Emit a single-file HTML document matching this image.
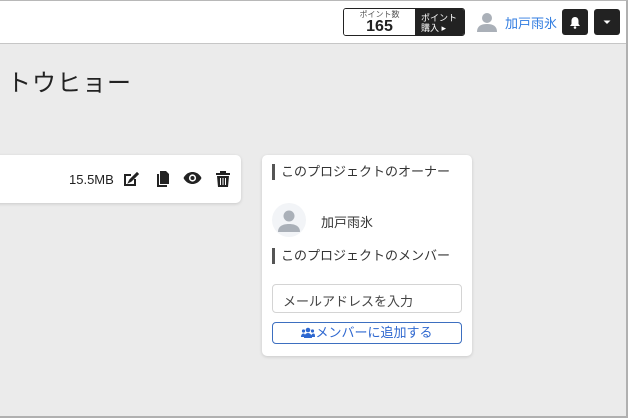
<!DOCTYPE html>
<html><head><meta charset="utf-8"><style>
*{margin:0;padding:0;box-sizing:border-box}
body{width:628px;height:418px;overflow:hidden;background:#ebebeb;font-family:"Liberation Sans","Noto Sans CJK JP",sans-serif;position:relative;color:#222}
.frame{position:absolute;left:0;top:0;width:628px;height:418px;border-top:1px solid #b8b8b8;border-right:2px solid #b0b0b0;border-bottom:2px solid #b0b0b0;z-index:10;pointer-events:none}
.hdr{position:absolute;left:0;top:0;width:628px;height:44px;background:#fff;border-bottom:1px solid #c6c6c6}
.abs{position:absolute}
.pts{left:343px;top:8px;width:122px;height:28px;border:1px solid #222;border-radius:3px;overflow:hidden;display:flex}
.pts .a{width:71px;background:#fff;text-align:center}
.pts .b{flex:1;background:#222;color:#fff;font-size:9px;line-height:10px;padding:4px 0 0 6px}
.btn{background:#222;border-radius:3px;width:26px;height:26px;top:9px}
.card{background:#fff;border-radius:5px;box-shadow:0 1px 3px rgba(0,0,0,.15)}
.h{font-size:13px;color:#333;border-left:3px solid #555;padding-left:6px;line-height:16px;height:16px}
</style></head><body>
<div class="hdr"></div>
<div class="abs pts"><div class="a"><div style="font-size:8px;color:#555;line-height:9px;margin-top:1px">ポイント数</div><div style="font-size:16px;font-weight:bold;line-height:16px">165</div></div><div class="b">ポイント<br>購入 ▸</div></div>
<svg class="abs" style="left:476px;top:11px" width="22" height="22" viewBox="0 0 22 22"><circle cx="11" cy="7" r="5" fill="#aab0b8"/><path d="M1 21c0-6 4-8 10-8s10 2 10 8z" fill="#aab0b8"/></svg>
<div class="abs" style="left:505px;top:13px;font-size:13px;color:#2f7be0">加戸雨氷</div>
<div class="abs btn" style="left:562px"><svg width="26" height="26" viewBox="0 0 26 26"><path d="M13 8c-2.5 0-3.5 2-3.5 4v3l-1.5 2h10l-1.5-2v-3c0-2-1-4-3.5-4z" fill="#fff"/><circle cx="13" cy="18.5" r="1.3" fill="#fff"/></svg></div>
<div class="abs btn" style="left:594px"><svg width="26" height="26" viewBox="0 0 26 26"><path d="M9.5 11.5h7l-3.5 3.5z" fill="#fff"/></svg></div>
<div class="abs" style="left:7px;top:63px;font-size:24px;color:#222;letter-spacing:1px">トウヒョー</div>
<div class="abs card" style="left:-6px;top:155px;width:247px;height:48px">
<div class="abs" style="left:75px;top:17px;font-size:13px;color:#222">15.5MB</div>
<svg class="abs" style="left:128px;top:15px" width="18" height="18" viewBox="0 0 18 18"><path d="M2 4h7v2H4v8h8V9h2v7H2z" fill="#222"/><path d="M9 11l-2 1 1-2 7-7 1 1z" fill="#222" stroke="#222" stroke-width="1.6"/></svg>
<svg class="abs" style="left:161px;top:15px" width="16" height="18" viewBox="0 0 16 18"><path d="M2 4h2v11h8v2H2z" fill="#222"/><path d="M5 1h6l3 3v10H5z" fill="#222"/></svg>
<svg class="abs" style="left:189px;top:16px" width="19" height="14" viewBox="0 0 19 14"><path d="M0.5 7C3 2 7 1 9.5 1S16 2 18.5 7C16 12 12 13 9.5 13S3 12 0.5 7z" fill="#222"/><circle cx="9.5" cy="7" r="3.6" fill="#fff"/><circle cx="9.5" cy="7" r="2" fill="#222"/></svg>
<svg class="abs" style="left:221px;top:15px" width="16" height="18" viewBox="0 0 16 18"><path d="M1 3h14v2H1zM5 1h6v2H5zM2 6h12l-1 11H3z" fill="#222"/><path d="M5.5 8v7M8 8v7M10.5 8v7" stroke="#fff" stroke-width="1"/></svg>
</div>
<div class="abs card" style="left:262px;top:155px;width:210px;height:201px">
<div class="abs h" style="left:10px;top:9px">このプロジェクトのオーナー</div>
<div class="abs" style="left:10px;top:48px;width:34px;height:34px;border-radius:50%;background:#f2f4f7"><svg width="34" height="34" viewBox="0 0 34 34"><circle cx="17" cy="13" r="5.5" fill="#aab0b8"/><path d="M6 29c0-6 5-8 11-8s11 2 11 8z" fill="#aab0b8"/></svg></div>
<div class="abs" style="left:59px;top:57px;font-size:13px;color:#333">加戸雨氷</div>
<div class="abs h" style="left:10px;top:93px">このプロジェクトのメンバー</div>
<div class="abs" style="left:10px;top:129px;width:190px;height:29px;border:1px solid #d4d4d4;border-radius:4px;font-size:13px;color:#444;padding:6px 0 0 10px">メールアドレスを入力</div>
<div class="abs" style="left:10px;top:167px;width:190px;height:22px;border:1px solid #3d6fc0;border-radius:4px;font-size:13px;color:#2f68d0;text-align:center;line-height:19px"><svg width="14" height="11" viewBox="0 0 14 11" style="vertical-align:-1px"><circle cx="7" cy="3" r="2.3" fill="#2f68d0"/><circle cx="2.5" cy="4" r="1.6" fill="#2f68d0"/><circle cx="11.5" cy="4" r="1.6" fill="#2f68d0"/><path d="M3 11c0-3 2-5 4-5s4 2 4 5zM0 10c0-2 1-3.5 2.5-3.5S4 8 4 10zM10 10c0-2 1-3.5 2.5-3.5S14 8 14 10z" fill="#2f68d0"/></svg>メンバーに追加する</div>
</div>
<div class="frame"></div>
</body></html>
